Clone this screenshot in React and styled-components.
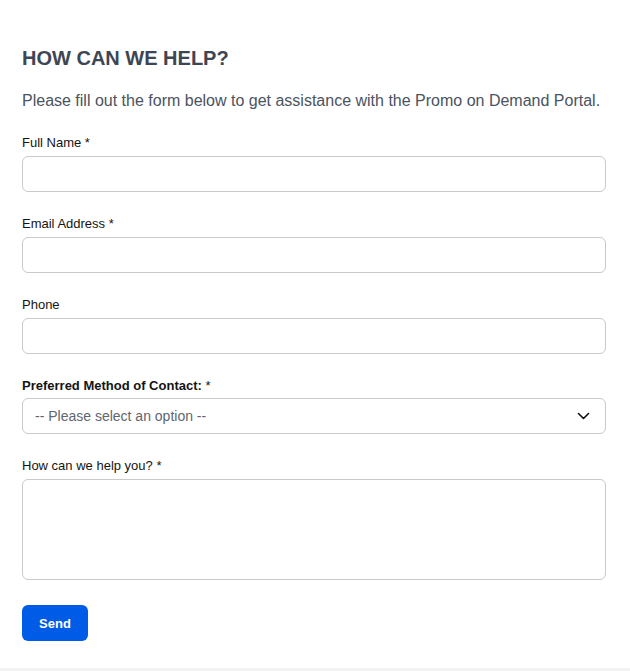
import React from "react";
import styled, { createGlobalStyle } from "styled-components";

const Global = createGlobalStyle`
  html, body { margin: 0; padding: 0; background: #f3f3f4; }
  body { font-family: "Liberation Sans", Arial, sans-serif; }
  * { box-sizing: border-box; }
`;

const Page = styled.div`
  background: #ffffff;
  padding: 47px 24px 27px 22px;
  min-height: 668px;
`;

const Heading = styled.h2`
  margin: 0;
  font-size: 20px;
  line-height: 23px;
  font-weight: 700;
  color: #3d4652;
`;

const Intro = styled.p`
  margin: 22px 0 25px;
  font-size: 16px;
  line-height: 18px;
  color: #4b5360;
`;

const Form = styled.form`
  display: flex;
  flex-direction: column;
`;

const Field = styled.div`
  display: flex;
  flex-direction: column;
  margin-bottom: 24px;
`;

const Label = styled.label`
  font-size: 13px;
  line-height: 15px;
  color: #141414;
  font-weight: ${(p) => (p.$bold ? 700 : 400)};
  margin-bottom: ${(p) => (p.$bold ? 5 : 6)}px;
`;

const Star = styled.span`
  font-weight: 400;
`;

const Input = styled.input`
  height: 36px;
  border: 1px solid #c9c9ce;
  border-radius: 6px;
  padding: 0 12px;
  font-family: inherit;
  font-size: 14px;
  background: #fff;
  outline: none;
`;

const SelectWrap = styled.div`
  position: relative;
  height: 36px;
`;

const Select = styled.select`
  appearance: none;
  width: 100%;
  height: 36px;
  border: 1px solid #c9c9ce;
  border-radius: 6px;
  padding: 0 40px 0 12px;
  font-family: inherit;
  font-size: 14px;
  color: #5f6670;
  background: #fff;
  outline: none;
`;

const Chevron = styled.svg`
  position: absolute;
  right: 16px;
  top: 12px;
  pointer-events: none;
`;

const TextArea = styled.textarea`
  height: 101px;
  border: 1px solid #c9c9ce;
  border-radius: 6px;
  padding: 10px 12px;
  font-family: inherit;
  font-size: 14px;
  resize: none;
  outline: none;
`;

const Button = styled.button`
  align-self: flex-start;
  margin-top: 1px;
  width: 66px;
  height: 36px;
  border: none;
  border-radius: 6px;
  background: #005ce6;
  color: #fff;
  font-family: "Liberation Sans", Arial, sans-serif;
  font-weight: 700;
  font-size: 13px;
  cursor: pointer;
`;

export default function App() {
  return (
    <>
      <Global />
      <Page>
        <Heading>HOW CAN WE HELP?</Heading>
        <Intro>
          Please fill out the form below to get assistance with the Promo on
          Demand Portal.
        </Intro>
        <Form onSubmit={(e) => e.preventDefault()}>
          <Field>
            <Label>Full Name *</Label>
            <Input type="text" />
          </Field>
          <Field>
            <Label>Email Address *</Label>
            <Input type="email" />
          </Field>
          <Field>
            <Label>Phone</Label>
            <Input type="tel" />
          </Field>
          <Field>
            <Label $bold>
              Preferred Method of Contact: <Star>*</Star>
            </Label>
            <SelectWrap>
              <Select defaultValue="">
                <option value="">-- Please select an option --</option>
                <option value="email">Email</option>
                <option value="phone">Phone</option>
              </Select>
              <Chevron width="13" height="12" viewBox="0 0 13 12">
                <path d="M1.5 3.5 L6.5 8.5 L11.5 3.5" fill="none" stroke="#111" strokeWidth="1.6" strokeLinecap="round" strokeLinejoin="round" />
              </Chevron>
            </SelectWrap>
          </Field>
          <Field>
            <Label>How can we help you? *</Label>
            <TextArea />
          </Field>
          <Button type="submit">Send</Button>
        </Form>
      </Page>
    </>
  );
}
